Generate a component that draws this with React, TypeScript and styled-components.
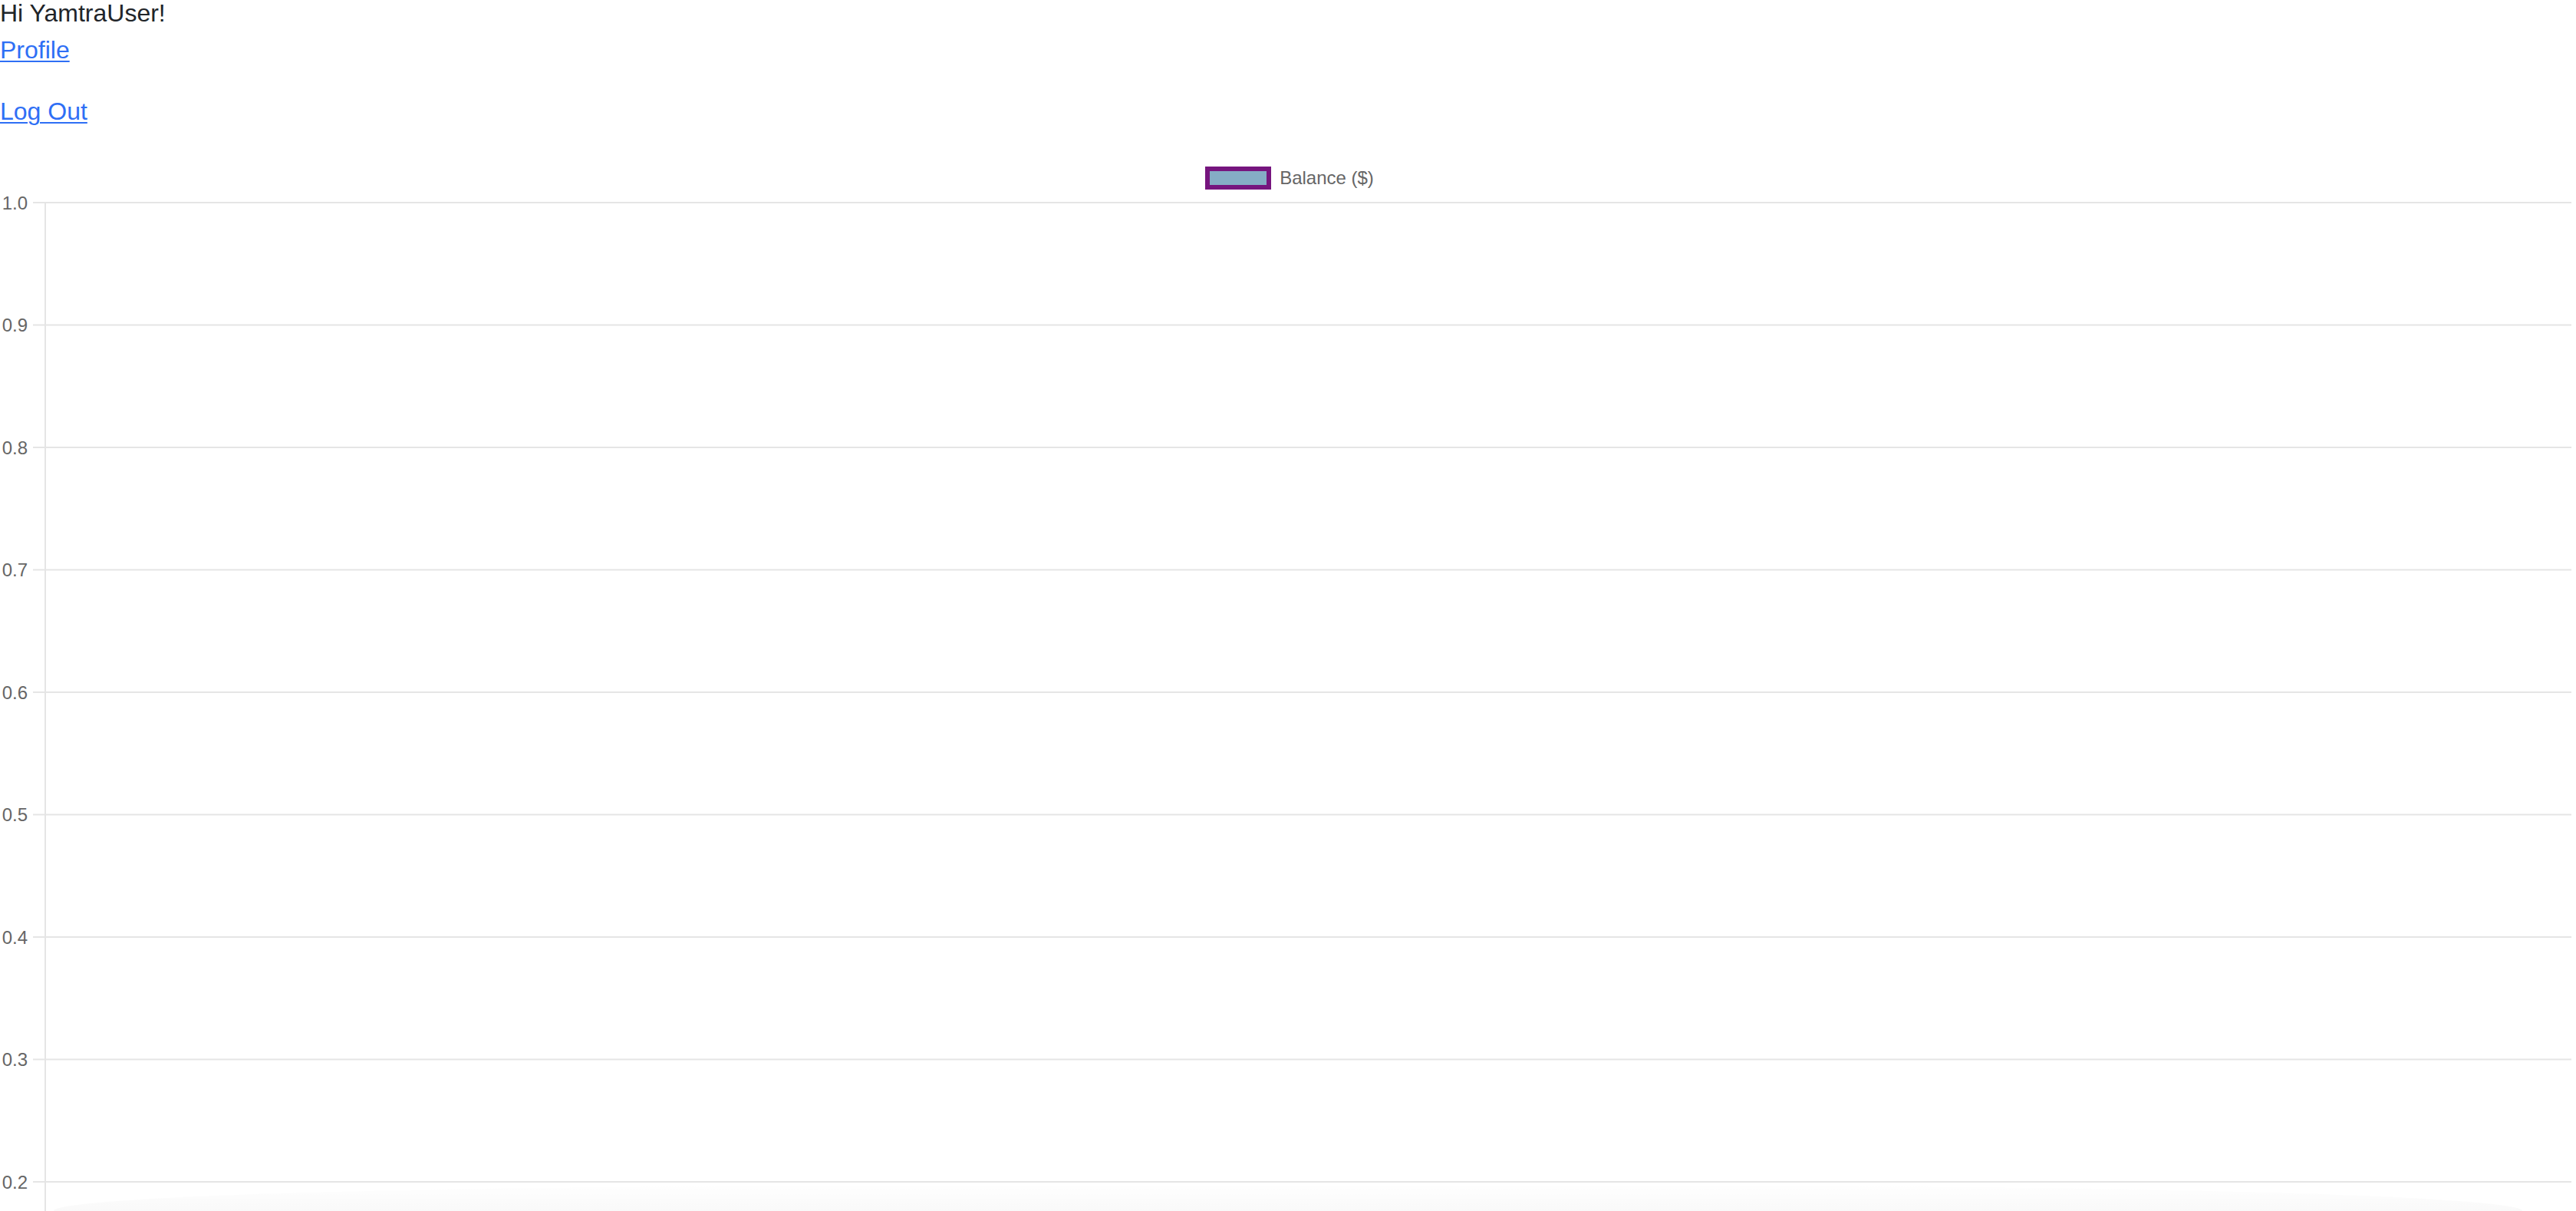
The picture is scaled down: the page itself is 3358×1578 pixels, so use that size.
import styled, { createGlobalStyle } from "styled-components";

const GlobalStyle = createGlobalStyle`
  html, body {
    margin: 0;
    padding: 0;
    background: #ffffff;
  }
  body {
    font-family: "Liberation Sans", Arial, Helvetica, sans-serif;
    color: #212529;
    overflow: hidden;
  }
`;

const Page = styled.div`
  position: relative;
  display: flex;
  flex-direction: column;
  height: 100vh;
  overflow: hidden;
`;

const Header = styled.header`
  display: flex;
  flex-direction: column;
  align-items: flex-start;
  font-size: 32px;
`;

const Greeting = styled.div`
  line-height: 34px;
  color: #212529;
`;

const NavLink = styled.a<{ $gap: number }>`
  display: block;
  margin-top: ${({ $gap }) => $gap}px;
  line-height: 48px;
  color: #2f6ff5;
  text-decoration: underline;
  text-underline-offset: 3px;
  text-decoration-thickness: 2px;
  cursor: pointer;
`;

const ChartSection = styled.section`
  display: flex;
  flex-direction: column;
  flex: 1;
  min-height: 0;
`;

const Legend = styled.div`
  display: flex;
  justify-content: center;
  align-items: center;
  gap: 11px;
  padding-top: 48px;
  padding-left: 4px;
  height: 30px;
  box-sizing: content-box;
`;

const LegendSwatch = styled.span<{ $fill: string; $stroke: string }>`
  display: block;
  width: 86px;
  height: 30px;
  box-sizing: border-box;
  border: 6px solid ${({ $stroke }) => $stroke};
  background: ${({ $fill }) => $fill};
`;

const LegendLabel = styled.span`
  font-family: "Liberation Sans", Arial, sans-serif;
  font-size: 24px;
  line-height: 30px;
  color: #666666;
`;

const Plot = styled.svg`
  display: block;
  flex: 1;
  width: 100%;
  min-height: 0;
`;

const TickLabel = styled.text`
  font-family: "Liberation Sans", Arial, sans-serif;
  font-size: 24px;
  fill: #666666;
`;

const BottomFade = styled.div`
  position: absolute;
  left: 70px;
  right: 70px;
  bottom: 0;
  height: 32px;
  border-radius: 1200px 1200px 0 0 / 40px 40px 0 0;
  background: linear-gradient(to bottom, rgba(0, 0, 0, 0.004), rgba(0, 0, 0, 0.022));
  pointer-events: none;
`;

const TOP = 17;
const STEP = 159.5;
const AXIS_X = 59;
const TICK_START = 43;
const RIGHT = 3352;

// only the ticks that fit in the visible part of the chart
const ticks = ["1.0", "0.9", "0.8", "0.7", "0.6", "0.5", "0.4", "0.3", "0.2"];

export default function App() {
  return (
    <>
      <GlobalStyle />
      <Page>
        <Header>
          <Greeting>Hi YamtraUser!</Greeting>
          <NavLink $gap={7} href="#">
            Profile
          </NavLink>
          <NavLink $gap={32} href="#">
            Log Out
          </NavLink>
        </Header>
        <ChartSection>
          <Legend>
            <LegendSwatch $fill="#85adc5" $stroke="#76157e" />
            <LegendLabel>Balance ($)</LegendLabel>
          </Legend>
          <Plot>
            <line x1={AXIS_X} x2={AXIS_X} y1={TOP} y2={2000} stroke="#e5e5e5" strokeWidth={2} />
            {ticks.map((t, i) => {
              const y = TOP + i * STEP;
              return (
                <g key={t}>
                  <line x1={TICK_START} x2={RIGHT} y1={y} y2={y} stroke="#e5e5e5" strokeWidth={2} />
                  <TickLabel x={36} y={y} textAnchor="end" dominantBaseline="central">
                    {t}
                  </TickLabel>
                </g>
              );
            })}
          </Plot>
        </ChartSection>
        <BottomFade />
      </Page>
    </>
  );
}
